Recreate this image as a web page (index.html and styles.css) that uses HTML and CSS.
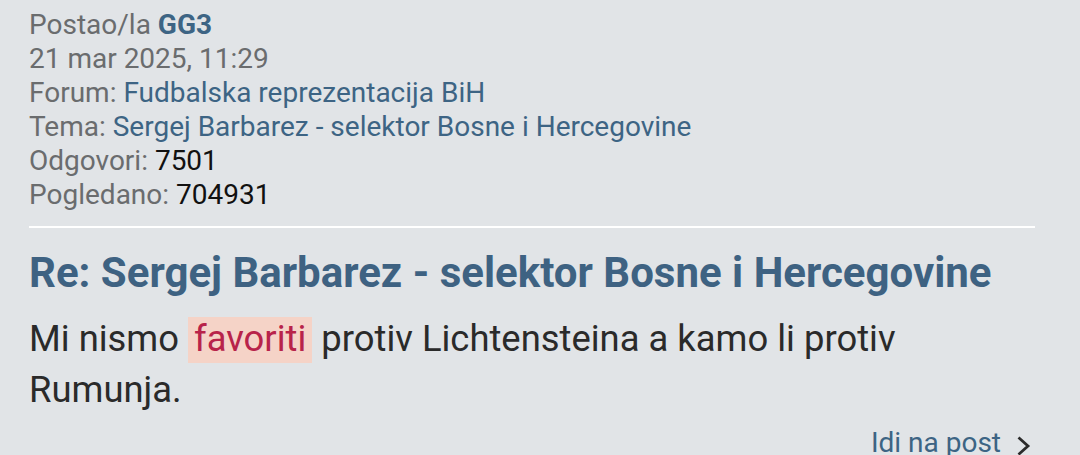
FILE: index.html
```html
<!DOCTYPE html>
<html lang="bs">
<head>
  <meta charset="UTF-8">
  <title>Pretraga</title>
  <link rel="stylesheet" href="styles.css">
</head>
<body>
  <div class="post">
    <!-- meta -->
    <div class="meta">
      <div>Postao/la <a class="author" href="#">GG3</a></div>
      <div>21 mar 2025, 11:29</div>
      <div>Forum: <a href="#">Fudbalska reprezentacija BiH</a></div>
      <div>Tema: <a href="#">Sergej Barbarez - selektor Bosne i Hercegovine</a></div>
      <div>Odgovori: <span class="num">7501</span></div>
      <div>Pogledano: <span class="num">704931</span></div>
    </div>

    <h2 class="title"><a href="#">Re: Sergej Barbarez - selektor Bosne i Hercegovine</a></h2>
    <p class="content">Mi nismo <span class="hl">favoriti</span> protiv Lichtensteina a kamo li protiv Rumunja.</p>

    <div class="jump">
      <a href="#">Idi na post</a>
      <svg width="15" height="22" viewBox="0 0 15 22"><path d="M2.5 2.5 L12 11 L2.5 19.5" fill="none" stroke="#2b2b2b" stroke-width="2.8"/></svg>
    </div>
  </div>
</body>
</html>
```

FILE: styles.css
```css
body {
  margin: 0;
  background-color: #e1e4e7;
  font-family: Roboto, "Noto Sans", sans-serif;
  color: #2b2b2b;
}

a {
  color: #3d6484;
  text-decoration: none;
}

.post {
  padding: 8px 28px 0 29px;
}

.meta {
  font-size: 28px;
  line-height: 34px;
  color: #6a6c6e;
  padding-bottom: 14px;
  border-bottom: 2px solid #fff;
  margin-right: 17px;
}

.meta .author {
  font-weight: bold;
}

.meta .num {
  color: #111;
}

.title {
  font-size: 42px;
  font-weight: bold;
  line-height: 50px;
  margin: 20px 0 0;
}

.title a {
  color: #3e6282;
}

.content {
  font-size: 36.4px;
  line-height: 51px;
  margin: 15px 0 0;
  color: #2a2a2a;
}

.hl {
  background-color: #f5d3c7;
  color: #b8234a;
  padding: 0 6px 3px;
}

.jump {
  display: flex;
  justify-content: flex-end;
  align-items: center;
  gap: 15px;
  margin: 11px 21px 0 0;
  font-size: 28px;
  line-height: 34px;
}

.jump svg {
  margin-top: 6px;
}
```
